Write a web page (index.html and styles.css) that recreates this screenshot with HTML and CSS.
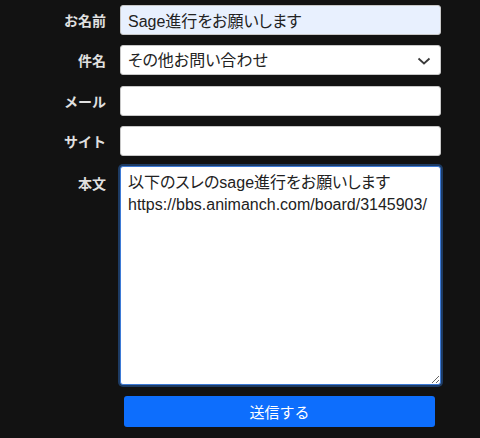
FILE: index.html
```html
<!DOCTYPE html>
<html lang="ja">
<head>
    <meta charset="UTF-8">
    <meta name="viewport" content="width=device-width, initial-scale=1.0">
    <title>お問い合わせ</title>
    <link rel="stylesheet" href="styles.css">
</head>
<body>
    <form class="contact-form">
        <label class="form-label" for="name">お名前</label>
        <input class="form-input autofilled" id="name" type="text" value="Sage進行をお願いします">

        <label class="form-label" for="subject">件名</label>
        <div class="select-wrap">
            <select class="form-input form-select" id="subject">
                <option>その他お問い合わせ</option>
            </select>
            <svg class="select-arrow" width="14" height="10" viewBox="0 0 14 10">
                <path d="M1.5 2.5 L7 7.5 L12.5 2.5" fill="none" stroke="#3a3a3a" stroke-width="1.8"/>
            </svg>
        </div>

        <label class="form-label" for="mail">メール</label>
        <input class="form-input" id="mail" type="email">

        <label class="form-label" for="site">サイト</label>
        <input class="form-input" id="site" type="url">

        <label class="form-label label-top" for="body">本文</label>
        <textarea class="form-input form-textarea is-focused" id="body">以下のスレのsage進行をお願いします
https://bbs.animanch.com/board/3145903/</textarea>

        <div></div>
        <button type="button" class="submit-button">送信する</button>
    </form>
</body>
</html>
```

FILE: styles.css
```css
* {
    margin: 0;
    padding: 0;
    box-sizing: border-box;
}

body {
    background-color: #121212;
    font-family: "Liberation Sans", "Noto Sans CJK JP", sans-serif;
}

.contact-form {
    display: grid;
    grid-template-columns: 106px 321px;
    column-gap: 14px;
    row-gap: 10.25px;
    padding-top: 5px;
}

.form-label {
    color: #e0e0e0;
    font-size: 14px;
    font-weight: bold;
    text-align: right;
    align-self: center;
}

.form-label.label-top {
    align-self: start;
    padding-top: 7px;
}

.form-input {
    width: 100%;
    height: 30px;
    padding: 0 7px;
    border: 1px solid #c8c8c8;
    border-radius: 3px;
    background: #fff;
    color: #222;
    font-family: "Liberation Sans", "Noto Sans CJK JP", sans-serif;
    font-size: 16px;
    font-feature-settings: "palt";
    outline: none;
}

.form-input.autofilled {
    background: #e8f0fe;
}

.select-wrap {
    position: relative;
}

.form-select {
    appearance: none;
    -webkit-appearance: none;
}

.select-arrow {
    position: absolute;
    right: 10px;
    top: 11px;
    pointer-events: none;
}

.form-textarea {
    height: 219px;
    padding: 5px 7px;
    line-height: 22px;
    resize: vertical;
}

.form-textarea.is-focused {
    border-color: #3d7ad6;
    box-shadow: 0 0 0 2px #1d3b63;
}

.submit-button {
    justify-self: start;
    width: 311px;
    height: 31px;
    margin-left: 4px;
    margin-top: 1px;
    border: none;
    border-radius: 3px;
    background: #0d6efd;
    color: #fff;
    font-family: "Liberation Sans", "Noto Sans CJK JP", sans-serif;
    font-size: 15px;
    cursor: pointer;
}
```
